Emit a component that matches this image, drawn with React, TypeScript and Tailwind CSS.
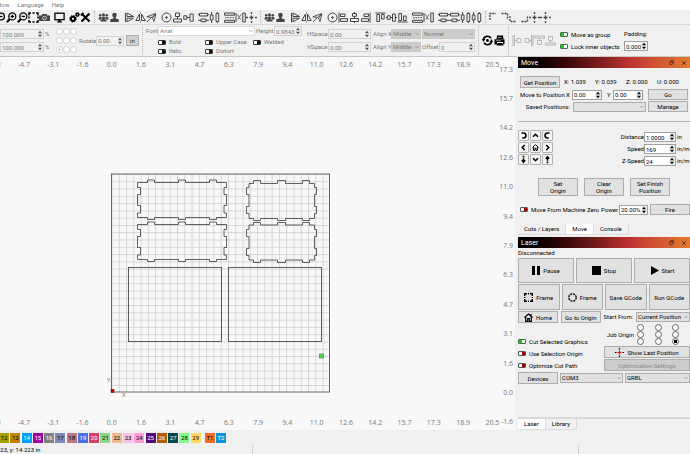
import type { ReactNode } from "react";
import { ChevronDown, Copy, X } from "lucide-react";
import clsx from "clsx";

const line = { fill: "none", stroke: "currentColor", strokeWidth: 1 };

const GLYPHS: Record<string, ReactNode> = {
  zoom: <g {...line} strokeWidth={1.3}><circle cx="6" cy="4.5" r="3.4" /><path d="M3.5 7 .8 10.2" strokeWidth="2" /><path d="M4.5 4.5h3" /></g>,
  zoomIn: <g {...line} strokeWidth={1.3}><circle cx="6.3" cy="4.4" r="3.5" /><path d="M3.8 7 .8 10.2" strokeWidth="2" /><path d="M4.6 4.4H8M6.3 2.7v3.4" /></g>,
  zoomOut: <g {...line} strokeWidth={1.3}><circle cx="6.3" cy="4.4" r="3.5" /><path d="M3.8 7 .8 10.2" strokeWidth="2" /><path d="M4.6 4.4H8" /></g>,
  frame: <path {...line} strokeWidth={1.5} d="M1 3.5V1h2M4.500 1h2M8 1h2v2.5M10 4.500v2M10 8V10H8M6.500 10h-2M3 10H1V8M1 6.500v-2" />,
  camera: <g><path d="M0 3.500h2.500L3.500 2h4l1 1.500H11V9H0z" fill="#444" /><circle cx="5.500" cy="6" r="1.900" fill="#555" stroke="#ddd" strokeWidth=".8" /></g>,
  monitor: <g><rect x=".9" y="1.200" width="9.200" height="6.500" {...line} strokeWidth={1.3} /><path d="M4.300 8h2.400v1.500H8v1H3v-1h1.300z" fill="currentColor" /></g>,
  gears: <g {...line}><circle cx="4" cy="6.800" r="2.100" strokeWidth="2" /><circle cx="4" cy="6.800" r="3.300" strokeWidth="1" strokeDasharray="1.300 1.300" /><circle cx="8.400" cy="2.600" r="1.300" strokeWidth="1.500" /><circle cx="8.400" cy="2.600" r="2.100" strokeDasharray=".8 .8" strokeWidth=".8" /></g>,
  tools: <g {...line} strokeWidth={2}><path d="m1.500 1.500 8 8M9.500 1.500l-8 8" /><path d="M.8 3.500 3.500.8M7.500 2 9 3.500" strokeWidth="1.300" /></g>,
  group: <g fill="currentColor"><circle cx="5.500" cy="2.700" r="1.500" /><circle cx="2.200" cy="3.200" r="1.300" /><circle cx="8.800" cy="3.200" r="1.300" /><path d="M.3 7.500 1 5.300l1.500-.5 1.500.5.500-.8h2l.5.800 1.500-.5 1.500.5.700 2.200H8.300l.4 2H2.300l.4-2z" /><path d="M3.700 5.500v2.500M7.300 5.500v2.500" stroke="#eee" strokeWidth=".6" /></g>,
  person: <g fill="currentColor"><circle cx="5.500" cy="3" r="2.300" /><path d="M4.300 4.500h2.400V6.500l3 .8V10H1.300V7.300l3-.8z" /></g>,
  mirrorV: <path {...line} d="M1.500.8v9.400M3 1l6.500 3.500H3zM3 9.800V6.200h6.500z" />,
  mirrorH: <path {...line} d="M4.500 2v6.500H.8zM6.500 2v6.500h3.700zM5.500.5v1M5.500 9.500v1" />,
  mirrorD: <path {...line} strokeWidth={0.9} d="M.8 4.800 9.500 1.500 6 5.500zM9.800 2 8 9.500 6.500 6zM1 10l4-4" />,
  target: <g {...line}><circle cx="5.500" cy="5.500" r="4.500" /><circle cx="5.500" cy="5.500" r=".8" fill="currentColor" /></g>,
  stackC: <path {...line} d="M3.500 1h4v3.500h-4zM1.500 7h8v3h-8zM5.500 4.500V7" />,
  sideC: <path {...line} d="M.8 3.800h3v3.500h-3zM7 2h3.200v7.200H7zM3.800 5.500H7" />,
  alignL: <path {...line} d="M1 .5v10M2.500 2h4.500v2.500H2.500zM2.500 6.700h7v2.700h-7z" />,
  alignC: <path {...line} d="M3.500 1.500h4v2.800h-4zM1.500 6.500h8v3h-8zM5.500 0v1.500M5.500 4.300v2.200M5.500 9.500V11" />,
  alignR: <path {...line} d="M10 .5v10M4 2h4.500v2.500H4zM1.500 6.700h7v2.700h-7z" />,
  alignT: <path {...line} d="M.5 1h10M1.800 2.500h2.700v7H1.800zM6.500 2.500h2.700V7H6.500z" />,
  alignM: <path {...line} d="M1.300 3.800h2.900v3.500H1.300zM6.500 2h2.800v7.200H6.500zM0 5.500h1.300M4.200 5.500h2.300M9.300 5.500H11" />,
  alignB: <path {...line} d="M.5 10h10M1.800 1.500h2.700v7H1.800zM6.500 4h2.700v4.500H6.500z" />,
  rows: <path {...line} d="M1.500 1.300h8v2.700h-8zM3 7h5v2.700H3zM0 2.600h1.500M9.500 2.600H11M0 8.300h3M8 8.300h3" />,
  cols: <path {...line} d="M1.300 3H4v5H1.300zM7 1.500h2.700v8H7zM2.600 0v3M2.600 8v3M8.300 0v1.500M8.300 9.500V11" />,
  spaceV: <g {...line}><path d="M.5 1h10v2.200H.5zM.5 8.300h10v2H.5z" /><path d="M1 5.700h9" strokeDasharray="1.500 1" /></g>,
  spaceH: <g {...line}><path d="M7.800 1h2.500v9H7.800zM1 1v9" /><path d="M2.500 2.500 6 8M6 2.500 2.500 8" strokeDasharray="1.500 .7" /></g>,
  cross: <path {...line} strokeWidth={1.3} d="M5.500 0v2M5.500 3.500v4M5.500 9v2M0 5.500h2M3.500 5.500h4M9 5.500h2" />,
  cornerTL: <path {...line} strokeWidth={1.3} strokeDasharray="2 1" d="M1 8V1.500h6" />,
  cornerTR: <path {...line} strokeWidth={1.3} strokeDasharray="2 1" d="M.5 1.500h6V7" />,
  cornerBL: <path {...line} strokeWidth={1.3} strokeDasharray="2 1" d="M1 4v5.500h6" />,
  cornerBR: <path {...line} strokeWidth={1.3} strokeDasharray="2 1" d="M.5 9.500h6V4" />,
  refresh: <g {...line} strokeWidth={1.6}><path d="M1.300 4.500a4.300 4.300 0 0 1 7.700-1.300M9.700 6.500A4.300 4.300 0 0 1 2 7.800" /><circle cx="5.500" cy="5.500" r=".6" fill="currentColor" /><path d="M0 4h3.500L1.300 7zM7.500 7h3.500L9.700 4z" fill="currentColor" strokeWidth="0" /></g>,
  printer: <g fill="currentColor"><path d="M3 .5h6l.5 3.500H2.500zM.5 4.300h10V9H9V7H3v2.500H.5zM3.800 8h4.500l1.500 2.500H2.500z" /><path d="M3.500 2.500h4M2 5.700h5" stroke="#eee" strokeWidth=".6" /></g>,
};

function Glyph({ name }: { name: string }) {
  const corner = name.startsWith("corner");
  return (
    <svg viewBox={corner ? "0 0 8 11" : "0 0 11 11"} className={clsx("h-[11px] shrink-0", corner ? "w-2" : "w-[11px]")} aria-hidden="true">
      {GLYPHS[name]}
    </svg>
  );
}

const TOOLBARS: string[][][] = [
  [["zoom", "zoomIn", "zoomOut", "frame", "camera"], ["monitor"], ["gears", "tools"]],
  [["group", "person"], ["mirrorV", "mirrorH", "mirrorD"], ["target", "stackC", "sideC"], ["rows", "cols"], ["spaceV", "spaceH", "cross"]],
  [["group", "person"], ["mirrorV", "mirrorH", "mirrorD"], ["target", "alignL", "alignC", "alignR"], ["alignT", "alignM", "alignB"], ["spaceV", "spaceH"], ["rows", "rows", "cols", "cols"]],
  [["cornerTL"], ["cornerTR", "cornerBL"], ["cornerBR", "cross", "cross"]],
];

const TOP_TICKS = ["-6.3", "-4.7", "-3.1", "-1.6", "0.0", "1.6", "3.1", "4.7", "6.3", "7.9", "9.4", "11.0", "12.6", "14.2", "15.7", "17.3", "18.9", "20.5"];
const SIDE_TICKS = ["17.3", "15.7", "14.2", "12.6", "11.0", "9.4", "7.9", "6.3", "4.7", "3.1", "1.6", "0.0", "-1.6"];

const LAYERS = [
  { n: "12", c: "bg-[#a0a000] text-black" },
  { n: "13", c: "bg-[#c08000] text-black" },
  { n: "14", c: "bg-[#00a0ff] text-white" },
  { n: "15", c: "bg-[#a000a0] text-white" },
  { n: "16", c: "bg-[#808080] text-white" },
  { n: "17", c: "bg-[#7d87b9] text-black" },
  { n: "18", c: "bg-[#bb7784] text-black" },
  { n: "19", c: "bg-[#4a6fe3] text-white" },
  { n: "20", c: "bg-[#d33f6a] text-white" },
  { n: "21", c: "bg-[#8cd78c] text-black" },
  { n: "22", c: "bg-[#f0b98d] text-black" },
  { n: "23", c: "bg-[#f6c4e1] text-black" },
  { n: "24", c: "bg-[#fa9ed4] text-black" },
  { n: "25", c: "bg-[#500a78] text-white" },
  { n: "26", c: "bg-[#b45a00] text-white" },
  { n: "27", c: "bg-[#004754] text-white" },
  { n: "28", c: "bg-[#86fa88] text-black" },
  { n: "29", c: "bg-[#ffdb66] text-black" },
];

function Grip() {
  return <div className="mx-[3px] w-0 shrink-0 self-stretch border-l border-dotted border-[#b5b5b5]" />;
}

function Spin({ label, value, unit, width, pale, stacked, labelClass }: {
  label: string; value: string; unit?: string; width: string; pale?: boolean; stacked?: boolean; labelClass?: string;
}) {
  return (
    <label className={clsx("flex shrink-0 whitespace-nowrap", stacked ? "flex-col items-start gap-[3px]" : "items-center")}>
      <span className={clsx("shrink-0", labelClass)}>{label}</span>
      <span className={clsx("flex h-[10px] shrink-0 items-center border pl-px", width, pale ? "border-[#d2d2d2] bg-[#f0f0f0]" : "border-[#a0a0a0] bg-white")}>
        <input defaultValue={value} className="w-0 min-w-0 flex-1 bg-transparent leading-none outline-none" />
        <svg viewBox="0 0 6 8" className={clsx("h-2 w-[6px] shrink-0", pale ? "text-[#555]" : "bg-[#eee] text-black")} aria-hidden="true">
          <path d="M1 3.300 3 .8l2 2.500zM1 4.700l2 2.500 2-2.500z" fill="currentColor" />
        </svg>
      </span>
      {unit && <span className="w-[14px] pl-px">{unit}</span>}
    </label>
  );
}

function Select({ label, value, className, tone = "bg-[#e1e1e1] border-[#adadad]" }: {
  label: string; value: string; className: string; tone?: string;
}) {
  return (
    <span className={clsx("relative flex shrink-0", className)}>
      <select aria-label={label} className={clsx("h-full w-full appearance-none border pl-px leading-none", tone)}>
        <option>{value}</option>
      </select>
      <ChevronDown size={6} strokeWidth={2} className="pointer-events-none absolute top-1/2 right-px -translate-y-1/2 text-[#777]" />
    </span>
  );
}

function Toggle({ label, state }: { label: string; state: "on" | "off" | "plain" }) {
  return (
    <label className="flex items-center gap-[3px] whitespace-nowrap">
      <input
        type="checkbox"
        defaultChecked={state === "on"}
        className={clsx(
          "h-[5px] w-2 shrink-0 appearance-none rounded-[1px] border",
          state === "on" && "border-[#456b45] bg-linear-to-r from-[#00e000] from-55% to-white to-55%",
          state === "off" && "border-[#555] bg-linear-to-r from-white from-45% to-[#a00000] to-45%",
          state === "plain" && "border-[#333] bg-linear-to-r from-white from-45% to-[#111] to-45%",
        )}
      />
      {label}
    </label>
  );
}

function Btn({ children, className }: { children: ReactNode; className?: string }) {
  return (
    <button className={clsx("flex items-center justify-center gap-[3px] border border-[#adadad] bg-[#e1e1e1] leading-[7px] whitespace-nowrap", className)}>
      {children}
    </button>
  );
}

function TitleBar({ title }: { title: string }) {
  return (
    <div className="flex h-[11px] items-center gap-[7px] bg-linear-to-r from-black via-[#c03232] via-65% to-[#e47a2c] px-[3px] text-white">
      <h2 className="flex-1 text-[7px]">{title}</h2>
      <button aria-label="Float" className="text-[#222]"><Copy size={5} strokeWidth={3} className="-scale-x-100" /></button>
      <button aria-label="Close" className="text-[#222]"><X size={6} strokeWidth={3} /></button>
    </div>
  );
}

function Tabs({ tabs, active }: { tabs: string[]; active: string }) {
  return (
    <div role="tablist" className="flex h-[11px]">
      {tabs.map((tab) => (
        <button
          key={tab}
          role="tab"
          aria-selected={tab === active}
          className={clsx("border-r border-b border-[#dcdcdc] px-[6px] leading-none", tab === active ? "bg-white" : "bg-[#f0f0f0]")}
        >
          {tab}
        </button>
      ))}
    </div>
  );
}

function MenuBar() {
  return (
    <nav className="flex h-[10px] items-center gap-2 overflow-hidden bg-white text-[#777]">
      <button className="-ml-3">Window</button>
      <button>Language</button>
      <button>Help</button>
    </nav>
  );
}

function IconBar() {
  return (
    <div className="flex h-[15px] items-center overflow-hidden border-b border-[#d8d8d8] py-px">
      <div className="-ml-[5px] flex h-full items-center">
        {TOOLBARS.map((bar, i) => (
          <div key={i} className={clsx("flex h-full items-center", i === 0 ? "text-black" : "text-[#444]")}>
            {i > 0 && <Grip />}
            <div className="flex gap-1">
              {bar.map((set, j) => (
                <div key={j} className="flex">
                  {set.map((name, k) => (
                    <button key={k} aria-label={name}><Glyph name={name} /></button>
                  ))}
                </div>
              ))}
            </div>
          </div>
        ))}
      </div>
    </div>
  );
}

const DOCK_ICONS = [
  "M1 0v11M2.500 0v11M2.500 5.500H5M5 3.500h4v4H5z",
  "M10 0v11M8.500 0v11M8.500 5.500H6M2 3.500h4v4H2z",
  "M.5 1h10v2H.5zM5.500 3v2.500M3.500 5.500h4v4h-4z",
  "M.5 8h10v2H.5zM5.500 8V5.500M3.500 1.500h4v4h-4z",
];

const DIM = "border-[#c8c8c8] bg-[#cccccc]";

function SettingsBar() {
  return (
    <div className="flex h-8 items-center overflow-hidden border-b border-[#c8c8c8] py-px text-[#777]">
      <div className="flex w-14 flex-col gap-[3px]">
        <Spin label="" value="100.000" unit="%" width="w-11" pale />
        <Spin label="" value="100.000" unit="%" width="w-11" pale />
      </div>
      <fieldset aria-label="Anchor" className="grid grid-cols-3 gap-y-[2px]">
        {Array.from({ length: 9 }, (_, i) => (
          <input key={i} type="radio" name="anchor" aria-label={`Anchor ${i + 1}`} defaultChecked={i === 6}
            className="size-[7px] appearance-none rounded-full border border-[#cfcfcf] bg-white checked:bg-[radial-gradient(#999_25%,white_30%)]" />
        ))}
      </fieldset>
      <div className="ml-[2px] flex items-center gap-[2px]">
        <Spin label="Rotate" value="0.00" width="w-7" labelClass="w-[17px]" pale />
        <Btn className="h-[11px] w-[13px] bg-[#d0d0d0]! text-[#333]">in</Btn>
      </div>
      <Grip />
      <div className="flex h-full w-[156px] shrink-0 flex-col">
        <div className="flex items-center">
          <span className="w-3 shrink-0">Font</span>
          <Select label="Font" value="Arial" className="mr-px h-[10px] w-[97px]" tone="border-[#dcdcdc] bg-white" />
          <Spin label="Height" value="0.9843" width="w-7" labelClass="w-[18px]" pale />
        </div>
        <div className="mt-[2px] ml-3 grid grid-cols-[47px_48px_1fr] gap-y-px">
          <Toggle label="Bold" state="plain" />
          <Toggle label="Upper Case" state="plain" />
          <Toggle label="Welded" state="plain" />
          <Toggle label="Italic" state="plain" />
          <Toggle label="Distort" state="plain" />
        </div>
      </div>
      <div className="ml-[5px] grid shrink-0 grid-cols-[66px_48px_54px] gap-y-[3px]">
        <Spin label="HSpace" value="0.00" width="w-[43px]" labelClass="w-[21px]" pale />
        <div className="flex items-center whitespace-nowrap">
          <span className="w-[18px] shrink-0">Align X</span>
          <Select label="Align X" value="Middle" className="h-[10px] w-[30px]" tone={DIM} />
        </div>
        <Select label="Mode" value="Normal" className="ml-px h-[10px]" tone={DIM} />
        <Spin label="VSpace" value="0.00" width="w-[43px]" labelClass="w-[21px]" pale />
        <div className="flex items-center whitespace-nowrap">
          <span className="w-[18px] shrink-0">Align Y</span>
          <Select label="Align Y" value="Middle" className="h-[10px] w-[30px]" tone={DIM} />
        </div>
        <Spin label="Offset" value="0" width="w-9" labelClass="w-[18px] pl-px" pale />
      </div>
      <Grip />
      <div className="flex gap-px text-black">
        <button aria-label="Refresh"><Glyph name="refresh" /></button>
        <button aria-label="Print and cut"><Glyph name="printer" /></button>
      </div>
      <Grip />
      <div className="flex text-[#b5b5b5]">
        {DOCK_ICONS.map((d) => (
          <button key={d} aria-label="Dock">
            <svg viewBox="0 0 11 11" className="size-[11px]"><path {...line} d={d} /></svg>
          </button>
        ))}
      </div>
      <div className="ml-1 flex items-center gap-2 text-black">
        <div className="flex w-14 flex-col gap-1">
          <Toggle label="Move as group" state="on" />
          <Toggle label="Lock inner objects" state="on" />
        </div>
        <Spin label="Padding:" value="0.000" width="w-6" stacked />
      </div>
    </div>
  );
}

type Span = [number, number];

// outline of a finger-jointed side: tabs step from the body edge to the outer edge
function jointed(
  x: Span, y: Span, top: number, bottom: number, step: Span, tabs: Span[], notches: Span[],
) {
  const p: number[][] = [[x[0], y[0]]];
  tabs.forEach(([a, b]) => p.push([a, y[0]], [a, top], [b, top], [b, y[0]]));
  p.push([x[1], y[0]]);
  notches.forEach(([a, b]) => p.push([x[1], a], [step[1], a], [step[1], b], [x[1], b]));
  p.push([x[1], y[1]]);
  [...tabs].reverse().forEach(([a, b]) => p.push([b, y[1]], [b, bottom], [a, bottom], [a, y[1]]));
  p.push([x[0], y[1]]);
  [...notches].reverse().forEach(([a, b]) => p.push([x[0], b], [step[0], b], [step[0], a], [x[0], a]));
  return p.map((pt) => pt.join(",")).join(" ");
}

const WIDE_TABS: Span[] = [[147.5, 154.5], [178.5, 185.5], [209.5, 216.5]];
const SMALL_TABS: Span[] = [[253.5, 260.5], [277.5, 285.5], [302.5, 309.5]];

const PARTS = [
  jointed([137.5, 226.5], [182.5, 217.5], 180, 219.5, [140.5, 224], WIDE_TABS, [[187.5, 194.5], [205.5, 213]]),
  jointed([137.5, 226.5], [224.5, 259.5], 222, 261.5, [140.5, 224], WIDE_TABS, [[229.5, 236.5], [247.5, 255]]),
  jointed([249, 314.5], [183.5, 218.5], 180.5, 220.5, [246.5, 316.5], SMALL_TABS, [[187.5, 194.5], [206.5, 213.5]]),
  jointed([249, 314.5], [225, 260], 222.5, 262.5, [246.5, 316.5], SMALL_TABS, [[229.5, 236.5], [248.5, 255.5]]),
];

function Ruler() {
  return (
    <div className="-ml-5 grid h-[15px] w-[527px] grid-cols-18 items-center text-center">
      {TOP_TICKS.map((t) => <span key={t}>{t}</span>)}
    </div>
  );
}

function Workspace() {
  return (
    <div className="flex min-w-0 flex-1 overflow-hidden bg-[#f8f8f8] font-['Open_Sans','Noto_Sans',sans-serif] text-[7px] text-[#777]">
      <div className="flex w-[499px] shrink-0 flex-col">
        <Ruler />
        <svg viewBox="0 72 499 343" className="block w-full">
          <defs>
            <pattern id="grid" x="111.5" y="174" width="7.28" height="7.28" patternUnits="userSpaceOnUse">
              <path d="M.5 0v7.28M0 .5h7.28" stroke="#cfcfcf" strokeWidth=".8" />
            </pattern>
          </defs>
          <rect x="111.5" y="174" width="218" height="218" fill="url(#grid)" stroke="#666" />
          <g fill="none" stroke="#3a3a3a" strokeWidth=".8">
            {PARTS.map((points) => <polygon key={points} points={points} />)}
            <rect x="128.5" y="267.5" width="93" height="74" />
            <rect x="228.5" y="267.5" width="93" height="74" />
          </g>
          <rect x="319.5" y="354" width="4" height="4" fill="#5fd35f" stroke="#3c8f3c" strokeWidth=".7" />
          <rect x="111" y="389.5" width="3" height="3" fill="#d00000" stroke="#500" strokeWidth=".5" />
          <g fontSize="6" fill="#80654f">
            <text x="107" y="382">Y</text>
            <text x="122" y="397">X</text>
          </g>
        </svg>
        <Ruler />
      </div>
      <div className="-mt-[2px] -mb-[7px] flex w-[14px] shrink-0 flex-col">
        {SIDE_TICKS.map((t) => (
          <span key={t} className="flex flex-1 items-center justify-end">{t}</span>
        ))}
      </div>
    </div>
  );
}

const JOG = [
  { name: "Rotate left", icon: <path d="M3 2.500h2.500a2.500 2.500 0 0 1 0 6H4" /> },
  { name: "Up", icon: <path d="m2.500 7 3-3 3 3" /> },
  { name: "Rotate right", icon: <path d="M8 2.500H5.500a2.500 2.500 0 0 0 0 6H7" /> },
  { name: "Left", icon: <path d="m7 2.500-3 3 3 3" /> },
  { name: "Home", icon: <path d="M1.800 5.500 5.500 2l3.700 3.500M3 5v4h1.800V6.500h1.400V9H8V5" strokeWidth="1.200" /> },
  { name: "Right", icon: <path d="m4 2.500 3 3-3 3" /> },
  { name: "Z down", icon: <path d="M5.500 1v2M5.500 4v4M3.500 6.500l2 2.300 2-2.300" /> },
  { name: "Down", icon: <path d="m2.500 4 3 3 3-3" /> },
  { name: "Z up", icon: <path d="M5.500 10V8M5.500 7V3M3.500 4.500l2-2.300 2 2.300" /> },
];

function MovePanel() {
  return (
    <section>
      <TitleBar title="Move" />
      <div className="px-[2px] pt-2">
        <div className="flex items-center gap-1">
          <Btn className="h-3 w-10">Get Position</Btn>
          <div className="grid flex-1 grid-cols-4 whitespace-nowrap">
            <span>X: 1.039</span><span>Y: 0.039</span><span>Z: 0.000</span><span>U: 0.000</span>
          </div>
        </div>
        <div className="mt-px flex items-center justify-between">
          <span className="w-[41px] whitespace-nowrap">Move to Position</span>
          <Spin label="X" value="0.00" width="w-[30px]" labelClass="w-[6px]" />
          <Spin label="Y" value="0.00" width="w-[30px]" labelClass="w-[6px]" />
          <Btn className="h-[11px] w-10">Go</Btn>
        </div>
        <div className="mt-px flex items-center justify-between">
          <span className="w-[50px] text-right whitespace-nowrap">Saved Positions:</span>
          <Select label="Saved Positions" value="" className="h-[10px] w-[73px]" />
          <Btn className="h-[11px] w-10">Manage</Btn>
        </div>
      </div>
      <hr className="mt-[9px] border-[#b5b5b5]" />
      <div className="mt-2 flex items-start justify-between">
        <div className="grid grid-cols-3 gap-px">
          {JOG.map(({ name, icon }) => (
            <button key={name} aria-label={name} className="size-[11px] rounded-[1px] border border-[#b0b0b0] bg-[#f4f4f4]">
              <svg viewBox="0 0 11 11" className="size-full" fill="none" stroke="black" strokeWidth="1.900">{icon}</svg>
            </button>
          ))}
        </div>
        <div className="flex flex-col items-end gap-[2px] pt-[2px]">
          <Spin label="Distance" value="1.0000" unit="in" width="w-8" />
          <Spin label="Speed" value="169" unit="in/m" width="w-8" />
          <Spin label="Z-Speed" value="24" unit="in/m" width="w-8" />
        </div>
      </div>
      <div className="mt-3 flex justify-center gap-[6px]">
        <Btn className="h-[18px] w-10">Set<br />Origin</Btn>
        <Btn className="h-[18px] w-10">Clear<br />Origin</Btn>
        <Btn className="h-[18px] w-10">Set Finish<br />Position</Btn>
      </div>
      <div className="mt-2 flex items-center justify-between pl-[2px]">
        <Toggle label="Move From Machine Zero" state="off" />
        <div className="flex items-center gap-[2px]">
          <Spin label="Power" value="20.00%" width="w-[29px]" labelClass="pr-px" />
          <Btn className="h-[11px] w-10">Fire</Btn>
        </div>
      </div>
      <div className="mt-[9px]"><Tabs tabs={["Cuts / Layers", "Move", "Console"]} active="Move" /></div>
    </section>
  );
}

function LaserPanel() {
  return (
    <section className="mt-[2px] flex flex-1 flex-col">
      <TitleBar title="Laser" />
      <p className="h-[10px] leading-[10px]">Disconnected</p>
      <div className="grid grid-cols-3 gap-[2px]">
        <Btn className="h-[25px]"><svg viewBox="0 0 8 9" className="h-[9px] w-2"><path d="M0 0h3v9H0zM5 0h3v9H5z" /></svg>Pause</Btn>
        <Btn className="h-[25px]"><svg viewBox="0 0 9 9" className="size-[9px]"><path d="M0 0h9v9H0z" /></svg>Stop</Btn>
        <Btn className="h-[25px]"><svg viewBox="0 0 9 9" className="size-[9px]"><path d="m1 0 8 4.500L1 9z" /></svg>Start</Btn>
      </div>
      <div className="mt-px grid grid-cols-4 gap-[2px]">
        <Btn className="h-[26px]">
          <svg viewBox="0 0 9 9" className="size-[9px]" fill="none" stroke="black" strokeWidth="1.400"><path d="M.7 3V.7H3M4 .7h1M6 .7h2.300V3M8.300 4v1M8.300 6v2.300H6M5 8.300H4M3 8.300H.7V6M.7 5V4" /></svg>
          Frame
        </Btn>
        <Btn className="h-[26px]">
          <svg viewBox="0 0 9 9" className="size-[9px]" fill="none" stroke="black" strokeWidth="1.300"><circle cx="4.500" cy="4.500" r="3.700" strokeDasharray="2.100 .8" /></svg>
          Frame
        </Btn>
        <Btn className="h-[26px]">Save GCode</Btn>
        <Btn className="h-[26px]">Run GCode</Btn>
      </div>
      <div className="mt-px flex items-center justify-between">
        <Btn className="h-3 w-10">
          <svg viewBox="0 0 9 9" className="size-[9px]" fill="none" stroke="black" strokeWidth="1.200"><path d="M.5 4.500 4.500 1l4 3.500M1.700 4v4.300h2V5.500h1.600v2.800h2V4M7 1v2" /></svg>
          Home
        </Btn>
        <Btn className="h-3 w-10">Go to Origin</Btn>
        <span>Start From:</span>
        <Select label="Start From" value="Current Position" className="h-[10px] w-[54px]" />
      </div>
      <div className="mt-px grid grid-cols-2">
        <div className="flex flex-col justify-end gap-px *:h-[11px]">
          <Toggle label="Cut Selected Graphics" state="on" />
          <Toggle label="Use Selection Origin" state="off" />
          <Toggle label="Optimize Cut Path" state="off" />
        </div>
        <div className="flex flex-col gap-px">
          <fieldset className="flex items-center gap-[3px]">
            <span className="w-[30px] text-right whitespace-nowrap">Job Origin</span>
            <div className="grid flex-1 grid-cols-3">
              {Array.from({ length: 9 }, (_, i) => (
                <input key={i} type="radio" name="job-origin" aria-label={`Job origin ${i + 1}`} defaultChecked={i === 8}
                  className="size-[7px] appearance-none rounded-full border border-[#666] bg-white checked:bg-[radial-gradient(black_40%,white_50%)]" />
              ))}
            </div>
          </fieldset>
          <Btn className="h-3">
            <svg viewBox="0 0 9 9" className="size-[9px]" fill="none" strokeWidth="1.200"><path d="M4.500 0v1.500M4.500 7.500V9M0 4.500h1.500M7.500 4.500H9" stroke="black" /><path d="M4.500 2.500v4M2.500 4.500h4" stroke="red" /></svg>
            Show Last Position
          </Btn>
          <Btn className="h-3 bg-[#cccccc]! text-[#8a8a8a]">Optimization Settings</Btn>
        </div>
      </div>
      <div className="mt-px flex items-center gap-[2px]">
        <Btn className="h-3 w-10">Devices</Btn>
        <Select label="Port" value="COM3" className="h-[10px] w-[63px]" />
        <Select label="Controller" value="GRBL" className="h-[10px] flex-1" />
      </div>
      <div className="mt-auto border-t-2 border-[#d8d8d8]"><Tabs tabs={["Laser", "Library"]} active="Laser" /></div>
    </section>
  );
}

export default function App() {
  return (
    <div className="flex min-h-screen flex-col bg-[#f0f0f0] font-[Roboto,'Noto_Sans',sans-serif] text-[6px] leading-[8px] text-black">
      <MenuBar />
      <IconBar />
      <SettingsBar />
      <main className="flex">
        <Workspace />
        <aside className="ml-[3px] flex w-[172px] shrink-0 flex-col">
          <MovePanel />
          <LaserPanel />
        </aside>
      </main>
      <div className="flex h-[15px] items-center">
        <div className="-ml-px grid w-[203px] grid-cols-18">
          {LAYERS.map((l) => (
            <button key={l.n} className={clsx("size-[10px] text-[6px] leading-none", l.c)}>{l.n}</button>
          ))}
        </div>
        <div className="ml-[3px] flex gap-px">
          <button className="size-[10px] bg-[#f36926] text-[6px] leading-none">T1</button>
          <button className="size-[10px] bg-[#0c96d9] text-[6px] leading-none text-white">T2</button>
        </div>
      </div>
      <footer className="flex h-[9px] items-center">
        <span className="-ml-[3px] w-[255px]">823, y: 14.223 in</span>
        <span className="h-full w-[327px] border-x border-[#d0d0d0]" />
      </footer>
    </div>
  );
}
